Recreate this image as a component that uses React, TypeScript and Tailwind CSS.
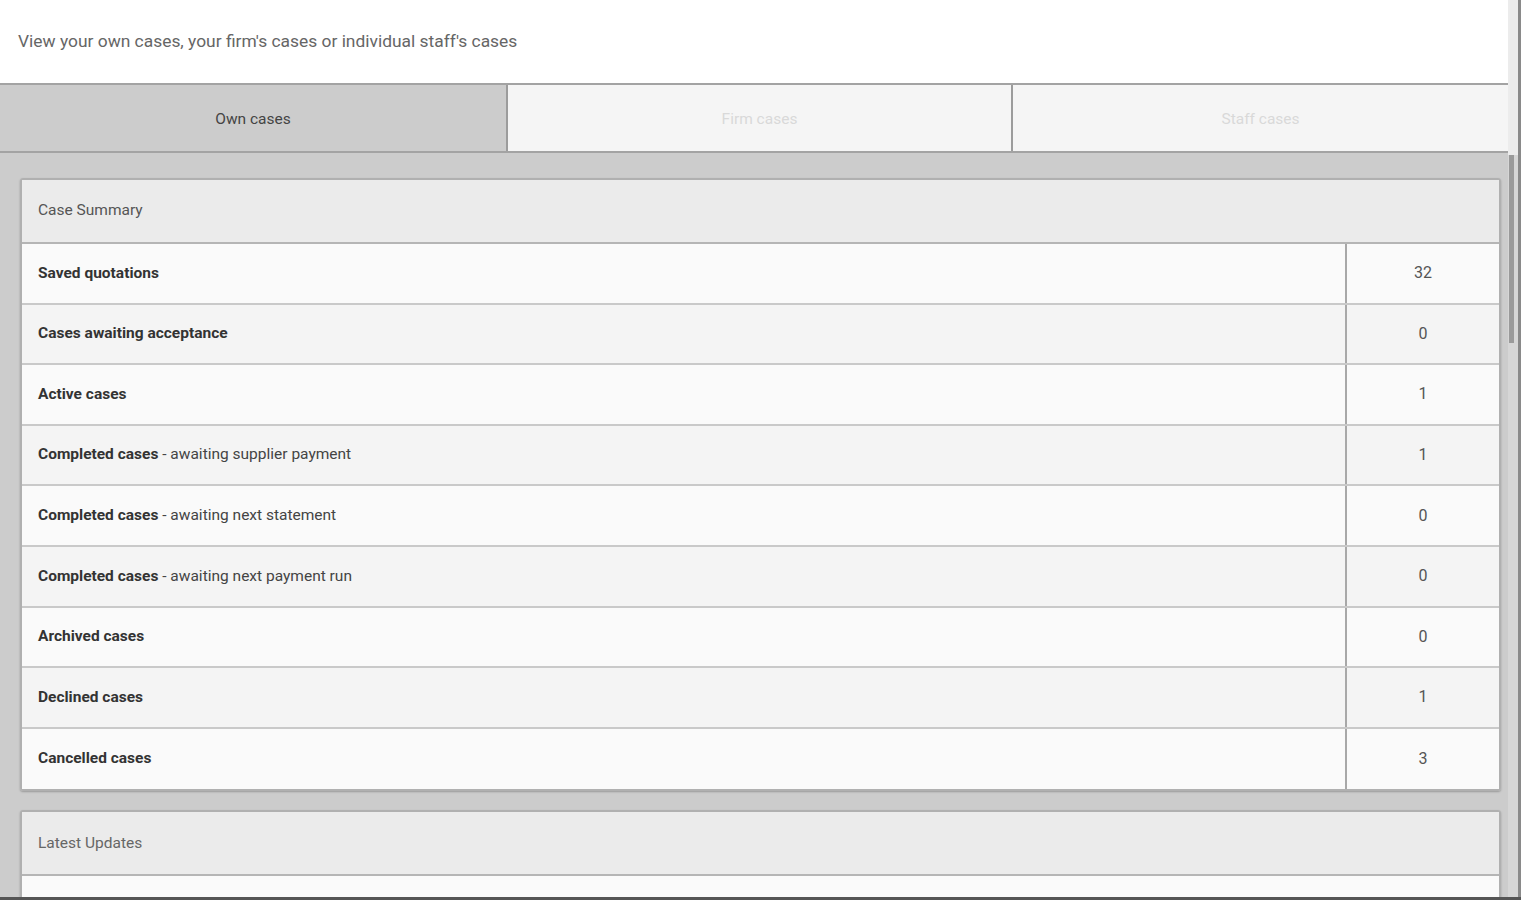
import React from "react";

type Row = { label: string; extra?: string; value: number };

const rows: Row[] = [
  { label: "Saved quotations", value: 32 },
  { label: "Cases awaiting acceptance", value: 0 },
  { label: "Active cases", value: 1 },
  { label: "Completed cases", extra: " - awaiting supplier payment", value: 1 },
  { label: "Completed cases", extra: " - awaiting next statement", value: 0 },
  { label: "Completed cases", extra: " - awaiting next payment run", value: 0 },
  { label: "Archived cases", value: 0 },
  { label: "Declined cases", value: 1 },
  { label: "Cancelled cases", value: 3 },
];

const tabs = ["Own cases", "Firm cases", "Staff cases"];

export default function App() {
  return (
    <div className="flex h-[900px] w-[1521px] overflow-hidden border-b-[3px] border-[#555] bg-[#cccccc] font-['Roboto',sans-serif]">
      <div className="flex w-[1508px] flex-col">
        {/* intro */}
        <div className="flex h-[83px] shrink-0 items-center bg-white px-[18px] text-[17.4px] text-[#666]">
          View your own cases, your firm's cases or individual staff's cases
        </div>
        {/* tabs */}
        <div className="flex h-[70px] shrink-0 border-y-2 border-[#a3a3a3]">
          {tabs.map((t, i) => (
            <div
              key={t}
              className={`flex items-center justify-center pt-[3px] text-[15.5px] ${
                i === 0
                  ? "w-[506px] bg-[#cccccc] text-[#444]"
                  : i === 1
                  ? "w-[505px] border-l-2 border-[#9c9c9c] bg-[#f5f5f5] text-[#d9d9d9]"
                  : "flex-1 border-l-2 border-[#9c9c9c] bg-[#f5f5f5] text-[#d9d9d9]"
              }`}
            >
              {t}
            </div>
          ))}
        </div>
        {/* body */}
        <div className="flex shrink-0 flex-col gap-[19px] pl-[20px] pr-[7px] pt-[25px]">
          <div className="shrink-0 rounded-[3px] border-2 border-[#b0b0b0] shadow-[0_1px_2px_rgba(0,0,0,0.25)]">
            <div className="flex h-[64px] items-center border-b-2 border-[#b5b5b5] bg-[#ebebeb] px-[16px] text-[15.5px] text-[#555]">
              Case Summary
            </div>
            {rows.map((r, i) => (
              <div
                key={i}
                className={`flex h-[60.6px] ${i < rows.length - 1 ? "border-b-2 border-[#c9c9c9]" : ""} ${
                  i % 2 === 0 ? "bg-[#fafafa]" : "bg-[#f4f4f4]"
                }`}
              >
                <div className="flex flex-1 items-center px-[16px] text-[15.5px] text-[#333]">
                  <span className="font-bold">{r.label}</span>
                  {r.extra && <span className="whitespace-pre text-[#444]">{r.extra}</span>}
                </div>
                <div className="flex w-[154px] items-center justify-center border-l-2 border-[#a8a8a8] text-[16px] text-[#555]">
                  {r.value}
                </div>
              </div>
            ))}
          </div>
          <div className="shrink-0 rounded-[3px] border-2 border-[#b0b0b0] shadow-[0_1px_2px_rgba(0,0,0,0.25)]">
            <div className="flex h-[64px] items-center border-b-2 border-[#b5b5b5] bg-[#ebebeb] px-[16px] text-[15.5px] text-[#666]">
              Latest Updates
            </div>
            <div className="h-[40px] bg-[#fafafa]" />
          </div>
        </div>
      </div>
      {/* scrollbar */}
      <div className="flex w-[13px] flex-col border-r-[3px] border-[#8a8a8a] bg-[#d6d6d6]">
        <div className="h-[155px] shrink-0 bg-[#ececec]" />
        <div className="ml-[1px] h-[188px] w-[5px] shrink-0 bg-[#9a9a9a]" />
      </div>
    </div>
  );
}
